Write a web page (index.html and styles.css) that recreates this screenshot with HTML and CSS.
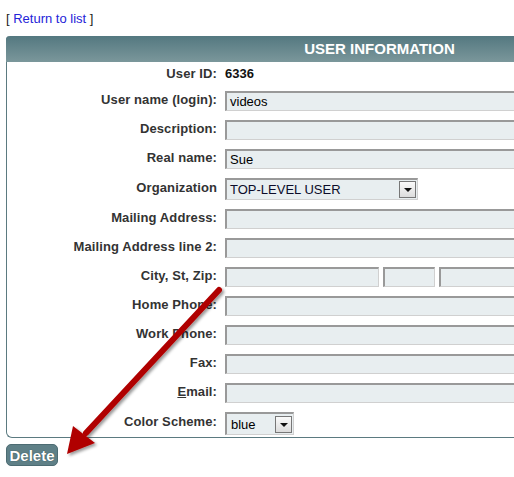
FILE: index.html
```html
<!DOCTYPE html>
<html lang="en">
<head>
  <meta charset="UTF-8">
  <title>User Information</title>
  <link rel="stylesheet" href="styles.css">
</head>
<body>
  <!-- Link back to the list -->
  <div class="topnav">[ <a href="#">Return to list</a> ]</div>

  <!-- User record panel -->
  <div class="panel">
    <div class="panel-head">USER INFORMATION</div>
    <div class="panel-body">
      <div class="row row-id">
        <label>User ID:</label>
        <span class="value">6336</span>
      </div>
      <div class="row">
        <label>User name (login):</label>
        <div class="field wide">videos</div>
      </div>
      <div class="row">
        <label>Description:</label>
        <div class="field wide"></div>
      </div>
      <div class="row">
        <label>Real name:</label>
        <div class="field wide">Sue</div>
      </div>
      <div class="row">
        <label>Organization</label>
        <div class="select org">
          <span class="select-value">TOP-LEVEL USER</span>
          <span class="select-btn"></span>
        </div>
      </div>
      <div class="row">
        <label>Mailing Address:</label>
        <div class="field wide"></div>
      </div>
      <div class="row">
        <label>Mailing Address line 2:</label>
        <div class="field wide"></div>
      </div>
      <div class="row">
        <label>City, St, Zip:</label>
        <div class="city">
          <div class="field city-name"></div>
          <div class="field city-state"></div>
          <div class="field city-zip"></div>
        </div>
      </div>
      <div class="row">
        <label>Home Phone:</label>
        <div class="field wide"></div>
      </div>
      <div class="row">
        <label>Work Phone:</label>
        <div class="field wide"></div>
      </div>
      <div class="row">
        <label>Fax:</label>
        <div class="field wide"></div>
      </div>
      <div class="row">
        <label><u>E</u>mail:</label>
        <div class="field wide"></div>
      </div>
      <div class="row">
        <label>Color Scheme:</label>
        <div class="select scheme">
          <span class="select-value">blue</span>
          <span class="select-btn"></span>
        </div>
      </div>
    </div>
  </div>

  <button class="btn-delete">Delete</button>

  <!-- Red callout arrow pointing at the delete button -->
  <svg class="callout" width="514" height="477" viewBox="0 0 514 477">
    <defs>
      <filter id="shade" x="-20%" y="-20%" width="140%" height="140%">
        <feDropShadow dx="2" dy="2" stdDeviation="1.5" flood-color="#000" flood-opacity="0.4"/>
      </filter>
    </defs>
    <g filter="url(#shade)" fill="#b00000">
      <line x1="219" y1="290" x2="86" y2="433" stroke="#b00000" stroke-width="6" stroke-linecap="round"/>
      <polygon points="67,454 73,426 95,443"/>
    </g>
  </svg>
</body>
</html>
```

FILE: styles.css
```css
body {
  margin: 0;
  padding: 0 6px;
  font-family: "Liberation Sans", Arial, sans-serif;
  font-size: 13px;
  color: #333;
  background: #fff;
  overflow: hidden;
  position: relative;
  height: 477px;
}

/* Top navigation */
.topnav {
  padding-top: 11px;
  line-height: 15px;
  color: #222;
}

.topnav a {
  color: #2424d8;
  text-decoration: none;
}

/* Panel */
.panel {
  margin-top: 10px;
  width: 746px;
  border-left: 1px solid #5b7a80;
  border-bottom: 1px solid #5b7a80;
  border-radius: 4px 0 0 6px;
}

.panel-head {
  height: 26px;
  line-height: 26px;
  margin-left: -1px;
  border-radius: 4px 0 0 0;
  background: linear-gradient(#547880, #7b979b);
  color: #fff;
  font-weight: bold;
  font-size: 15px;
  text-align: center;
}

.panel-body {
  padding: 3px 0 2px;
  display: flex;
  flex-direction: column;
  gap: 9px;
}

.row {
  display: flex;
  align-items: center;
  gap: 8px;
}

.row label {
  width: 210px;
  flex: none;
  padding-bottom: 4px;
  text-align: right;
  font-weight: bold;
  letter-spacing: 0.1px;
  color: #333;
}

.row-id {
  height: 17px;
}

.row-id label {
  padding-bottom: 0;
}

.row-id .value {
  font-weight: bold;
  color: #111;
}

/* Text boxes */
.field {
  box-sizing: border-box;
  height: 20px;
  padding: 0 3px;
  line-height: 17px;
  background: #e8eef0;
  border-top: 2px solid #999;
  border-left: 2px solid #999;
  border-bottom: 1px solid #d0d0d0;
  border-right: 1px solid #d0d0d0;
  color: #000;
}

.wide {
  width: 420px;
}

.city {
  display: flex;
  gap: 4px;
}

.city-name {
  width: 154px;
}

.city-state {
  width: 52px;
}

.city-zip {
  width: 120px;
}

/* Drop-down lists */
.select {
  box-sizing: border-box;
  display: flex;
  align-items: center;
  background: #e8eef0;
  border-top: 2px solid #999;
  border-left: 2px solid #999;
  border-bottom: 1px solid #d0d0d0;
  border-right: 1px solid #d0d0d0;
  color: #000;
  padding: 1px 1px 1px 3px;
}

.select-value {
  flex: 1;
}

.org {
  width: 193px;
  height: 22px;
  color: #0c0c2a;
}

.scheme {
  width: 69px;
  height: 23px;
  padding-left: 4px;
}

.select-btn {
  box-sizing: border-box;
  width: 17px;
  height: 17px;
  border: 1px solid #777;
  background: linear-gradient(#fafafa, #dcdcdc);
  display: flex;
  align-items: center;
  justify-content: center;
}

.select-btn::after {
  content: "";
  border-left: 4px solid transparent;
  border-right: 4px solid transparent;
  border-top: 4px solid #111;
  margin-top: 1px;
}

/* Delete button */
.btn-delete {
  margin-top: 6px;
  width: 52px;
  height: 22px;
  padding: 0;
  border: 1px solid #4d6c73;
  border-radius: 5px;
  background: #5f8087;
  color: #fff;
  font-family: "Liberation Sans", Arial, sans-serif;
  font-weight: bold;
  font-size: 15px;
  text-shadow: 0 0 1px #24393e;
}

/* Callout overlay */
.callout {
  position: absolute;
  left: 0;
  top: 0;
  pointer-events: none;
}
```
